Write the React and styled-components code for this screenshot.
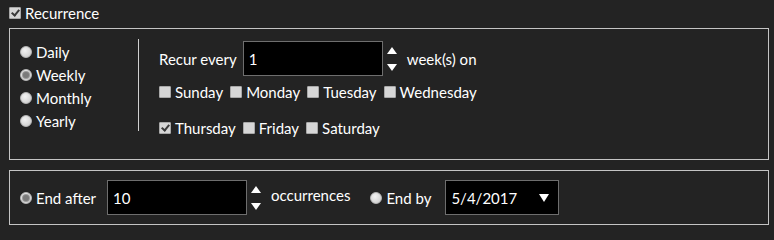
import React from "react";
import styled, { createGlobalStyle } from "styled-components";

const Global = createGlobalStyle`
  html, body { margin: 0; padding: 0; background: #232323; }
  body {
    font-family: Lato, "Liberation Sans", sans-serif;
    font-size: 15px;
    color: #ffffff;
  }
  * { box-sizing: border-box; }
`;

const Page = styled.div`
  padding: 5px 5px 0 9px;
  width: 774px;
  height: 226px;
  display: flex;
  flex-direction: column;
`;

const Header = styled.label`
  display: flex;
  align-items: center;
  gap: 4px;
  height: 16px;
  margin-bottom: 7px;
`;

const Box = styled.div`
  width: 760px;
  height: ${(p) => p.$h}px;
  border: 1px solid #c4c4c4;
  display: flex;
  padding: ${(p) => p.$pad};
  margin-bottom: ${(p) => p.$mb || 0}px;
`;

const Check = styled.input.attrs({ type: "checkbox" })`
  appearance: none;
  margin: 0;
  width: 12px;
  height: 12px;
  flex: none;
  background: #d6d6d6;
  border: 1px solid #a8a8a8;
  border-radius: 1px;
  position: relative;
  &:checked::after {
    content: "";
    position: absolute;
    left: 3px;
    top: 0px;
    width: 3px;
    height: 6px;
    border: solid #3a3a3a;
    border-width: 0 2px 2px 0;
    transform: rotate(40deg);
  }
`;

const Radio = styled.input.attrs({ type: "radio" })`
  appearance: none;
  margin: 0;
  width: 12px;
  height: 12px;
  flex: none;
  border-radius: 50%;
  background: radial-gradient(circle at 40% 35%, #f2f2f2, #c8c8c8);
  border: 1px solid #b8b8b8;
  position: relative;
  &:checked::after {
    content: "";
    position: absolute;
    left: 2px;
    top: 2px;
    width: 6px;
    height: 6px;
    border-radius: 50%;
    background: #7a7a7a;
    box-shadow: 0 0 0 1px #9a9a9a;
  }
`;

const Options = styled.div`
  display: flex;
  flex-direction: column;
  width: 118px;
  padding-top: 11px;
`;

const Option = styled.label`
  display: flex;
  align-items: center;
  gap: 4px;
  height: 23px;
`;

const Divider = styled.div`
  width: 1px;
  height: 92px;
  margin-top: 10px;
  background: #cfcfcf;
  margin-right: 20px;
`;

const Detail = styled.div`
  display: flex;
  flex-direction: column;
  padding-top: 12px;
`;

const Line = styled.div`
  display: flex;
  align-items: center;
  height: ${(p) => p.$h || 20}px;
  margin-bottom: ${(p) => p.$mb || 0}px;
`;

const Text = styled.span`
  margin-right: ${(p) => p.$mr || 0}px;
  white-space: nowrap;
  ${(p) => (p.$up ? "position: relative; top: -3px;" : "")}
`;

const Field = styled.div`
  width: ${(p) => p.$w}px;
  height: 35px;
  background: #000;
  border: 1px solid #6e6e6e;
  display: flex;
  align-items: center;
  padding: 0 5px;
  flex: none;
`;

const Spinner = styled.div`
  display: flex;
  flex-direction: column;
  justify-content: space-between;
  height: 24px;
  width: 10px;
  margin: 0 10px 0 4px;
`;

const Tri = styled.span`
  width: 0;
  height: 0;
  border-left: 5px solid transparent;
  border-right: 5px solid transparent;
  ${(p) =>
    p.$down ? "border-top: 7px solid #fff;" : "border-bottom: 7px solid #fff;"}
`;

const Day = styled.label`
  display: flex;
  align-items: center;
  gap: 4px;
  margin-right: 7px;
`;

const SelectBox = styled(Field)`
  justify-content: space-between;
  padding: 0 9px 0 5px;
`;

const Arrow = styled.span`
  width: 0;
  height: 0;
  border-left: 5px solid transparent;
  border-right: 5px solid transparent;
  border-top: 8px solid #fff;
`;

const EndOption = styled.label`
  display: flex;
  align-items: center;
  gap: 4px;
  margin-right: ${(p) => p.$mr || 11}px;
`;

const days1 = ["Sunday", "Monday", "Tuesday", "Wednesday"];
const days2 = ["Thursday", "Friday", "Saturday"];

export default function App() {
  return (
    <>
      <Global />
      <Page>
        <Header>
          <Check defaultChecked />
          <span>Recurrence</span>
        </Header>
        <Box $h={132} $pad="0 0 0 10px" $mb={10}>
          <Options>
            {["Daily", "Weekly", "Monthly", "Yearly"].map((o) => (
              <Option key={o}>
                <Radio name="freq" defaultChecked={o === "Weekly"} />
                <span>{o}</span>
              </Option>
            ))}
          </Options>
          <Divider />
          <Detail>
            <Line $h={35} $mb={6}>
              <Text $mr={6}>Recur every</Text>
              <Field $w={140}>1</Field>
              <Spinner>
                <Tri />
                <Tri $down />
              </Spinner>
              <Text>week(s) on</Text>
            </Line>
            <Line $mb={16}>
              {days1.map((d) => (
                <Day key={d}>
                  <Check />
                  <span>{d}</span>
                </Day>
              ))}
            </Line>
            <Line>
              {days2.map((d) => (
                <Day key={d}>
                  <Check defaultChecked={d === "Thursday"} />
                  <span>{d}</span>
                </Day>
              ))}
            </Line>
          </Detail>
        </Box>
        <Box $h={55} $pad="0 0 0 10px">
          <Line $h={53}>
            <EndOption $mr={11}>
              <Radio name="end" defaultChecked />
              <span>End after</span>
            </EndOption>
            <Field $w={140}>10</Field>
            <Spinner>
              <Tri />
              <Tri $down />
            </Spinner>
            <Text $mr={20} $up>occurrences</Text>
            <EndOption $mr={14}>
              <Radio name="end" />
              <span>End by</span>
            </EndOption>
            <SelectBox $w={114}>
              <span>5/4/2017</span>
              <Arrow />
            </SelectBox>
          </Line>
        </Box>
      </Page>
    </>
  );
}
